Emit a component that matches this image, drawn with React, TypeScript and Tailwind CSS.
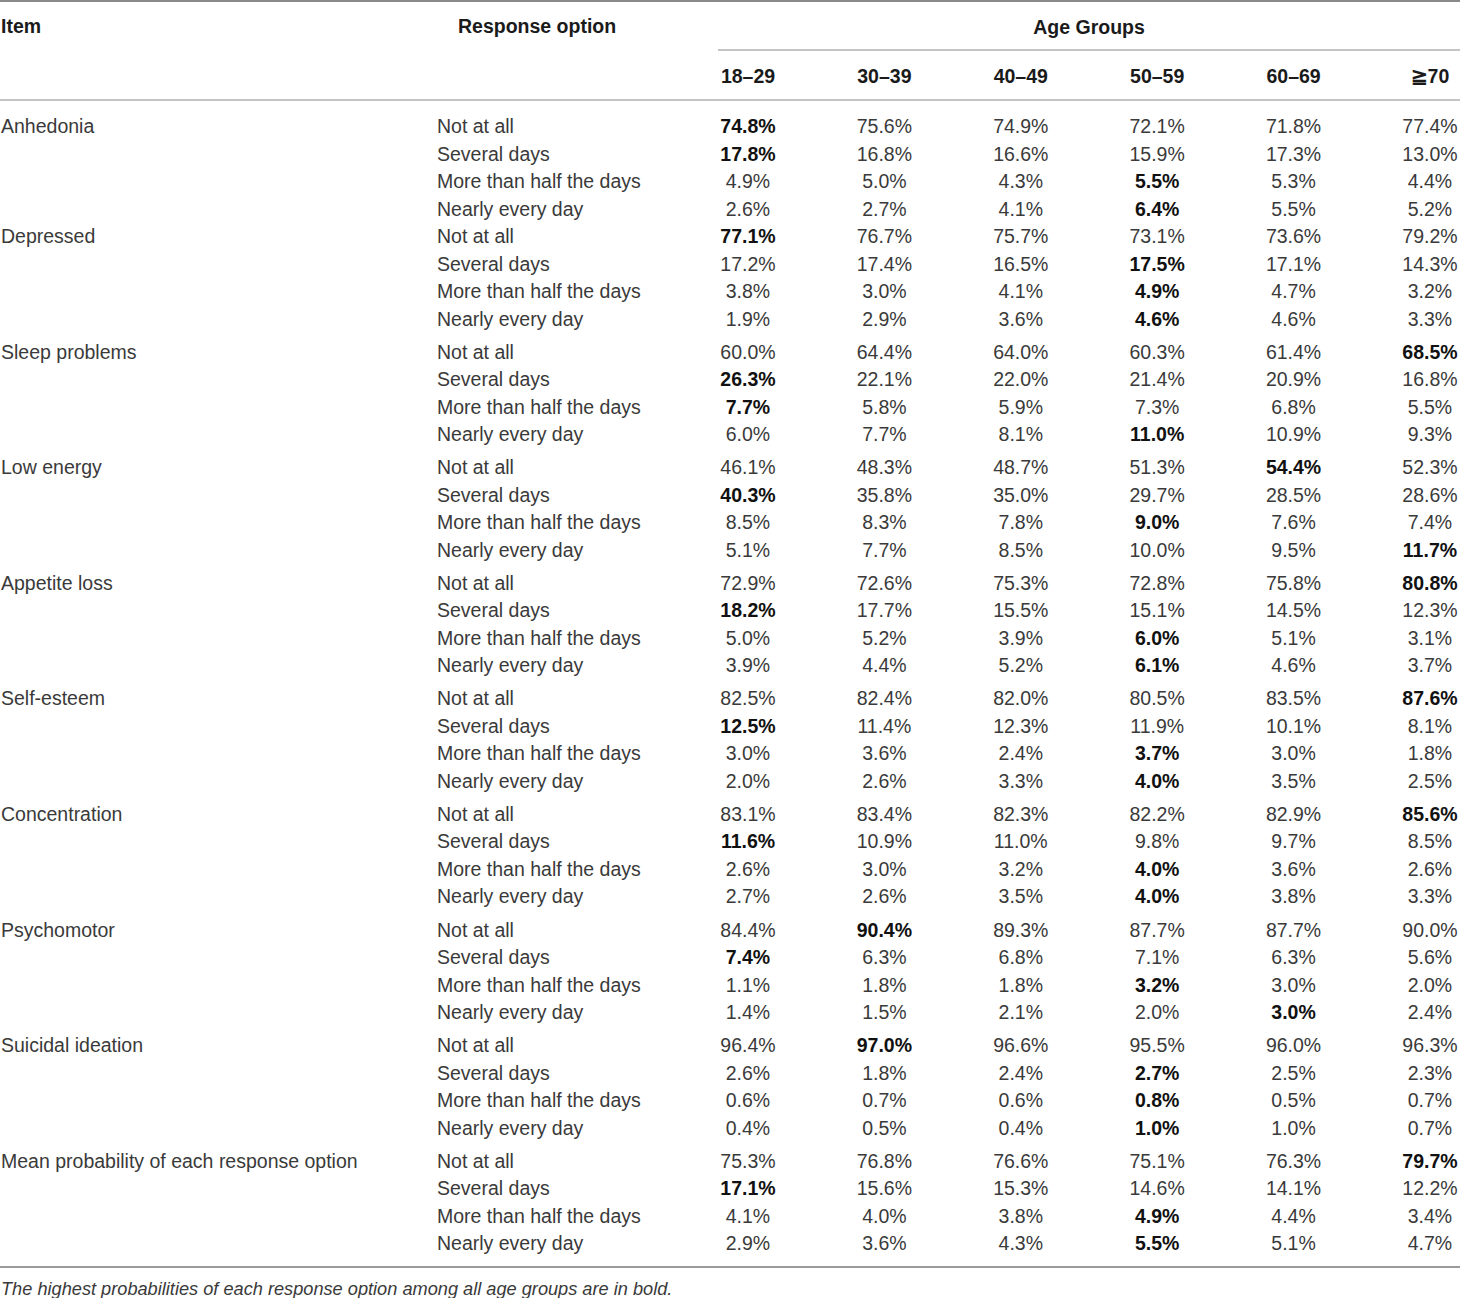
const OPTIONS = ['Not at all', 'Several days', 'More than half the days', 'Nearly every day'];
const AGES = ['18–29', '30–39', '40–49', '50–59', '60–69', '≧70'];

// "*" prefix marks the highest probability (bold)
const ITEMS: { name: string; rows: string[][] }[] = [
  { name: 'Anhedonia', rows: [
    ['*74.8%', '75.6%', '74.9%', '72.1%', '71.8%', '77.4%'],
    ['*17.8%', '16.8%', '16.6%', '15.9%', '17.3%', '13.0%'],
    ['4.9%', '5.0%', '4.3%', '*5.5%', '5.3%', '4.4%'],
    ['2.6%', '2.7%', '4.1%', '*6.4%', '5.5%', '5.2%'],
  ] },
  { name: 'Depressed', rows: [
    ['*77.1%', '76.7%', '75.7%', '73.1%', '73.6%', '79.2%'],
    ['17.2%', '17.4%', '16.5%', '*17.5%', '17.1%', '14.3%'],
    ['3.8%', '3.0%', '4.1%', '*4.9%', '4.7%', '3.2%'],
    ['1.9%', '2.9%', '3.6%', '*4.6%', '4.6%', '3.3%'],
  ] },
  { name: 'Sleep problems', rows: [
    ['60.0%', '64.4%', '64.0%', '60.3%', '61.4%', '*68.5%'],
    ['*26.3%', '22.1%', '22.0%', '21.4%', '20.9%', '16.8%'],
    ['*7.7%', '5.8%', '5.9%', '7.3%', '6.8%', '5.5%'],
    ['6.0%', '7.7%', '8.1%', '*11.0%', '10.9%', '9.3%'],
  ] },
  { name: 'Low energy', rows: [
    ['46.1%', '48.3%', '48.7%', '51.3%', '*54.4%', '52.3%'],
    ['*40.3%', '35.8%', '35.0%', '29.7%', '28.5%', '28.6%'],
    ['8.5%', '8.3%', '7.8%', '*9.0%', '7.6%', '7.4%'],
    ['5.1%', '7.7%', '8.5%', '10.0%', '9.5%', '*11.7%'],
  ] },
  { name: 'Appetite loss', rows: [
    ['72.9%', '72.6%', '75.3%', '72.8%', '75.8%', '*80.8%'],
    ['*18.2%', '17.7%', '15.5%', '15.1%', '14.5%', '12.3%'],
    ['5.0%', '5.2%', '3.9%', '*6.0%', '5.1%', '3.1%'],
    ['3.9%', '4.4%', '5.2%', '*6.1%', '4.6%', '3.7%'],
  ] },
  { name: 'Self-esteem', rows: [
    ['82.5%', '82.4%', '82.0%', '80.5%', '83.5%', '*87.6%'],
    ['*12.5%', '11.4%', '12.3%', '11.9%', '10.1%', '8.1%'],
    ['3.0%', '3.6%', '2.4%', '*3.7%', '3.0%', '1.8%'],
    ['2.0%', '2.6%', '3.3%', '*4.0%', '3.5%', '2.5%'],
  ] },
  { name: 'Concentration', rows: [
    ['83.1%', '83.4%', '82.3%', '82.2%', '82.9%', '*85.6%'],
    ['*11.6%', '10.9%', '11.0%', '9.8%', '9.7%', '8.5%'],
    ['2.6%', '3.0%', '3.2%', '*4.0%', '3.6%', '2.6%'],
    ['2.7%', '2.6%', '3.5%', '*4.0%', '3.8%', '3.3%'],
  ] },
  { name: 'Psychomotor', rows: [
    ['84.4%', '*90.4%', '89.3%', '87.7%', '87.7%', '90.0%'],
    ['*7.4%', '6.3%', '6.8%', '7.1%', '6.3%', '5.6%'],
    ['1.1%', '1.8%', '1.8%', '*3.2%', '3.0%', '2.0%'],
    ['1.4%', '1.5%', '2.1%', '2.0%', '*3.0%', '2.4%'],
  ] },
  { name: 'Suicidal ideation', rows: [
    ['96.4%', '*97.0%', '96.6%', '95.5%', '96.0%', '96.3%'],
    ['2.6%', '1.8%', '2.4%', '*2.7%', '2.5%', '2.3%'],
    ['0.6%', '0.7%', '0.6%', '*0.8%', '0.5%', '0.7%'],
    ['0.4%', '0.5%', '0.4%', '*1.0%', '1.0%', '0.7%'],
  ] },
  { name: 'Mean probability of each response option', rows: [
    ['75.3%', '76.8%', '76.6%', '75.1%', '76.3%', '*79.7%'],
    ['*17.1%', '15.6%', '15.3%', '14.6%', '14.1%', '12.2%'],
    ['4.1%', '4.0%', '3.8%', '*4.9%', '4.4%', '3.4%'],
    ['2.9%', '3.6%', '4.3%', '*5.5%', '5.1%', '4.7%'],
  ] },
];

export default function App() {
  return (
    <div className="w-[1460px] bg-white text-[19.5px] text-[#3a3a3a] font-['Liberation_Sans',Arial,sans-serif]">
      {/* header */}
      <div className="border-t-2 border-b-2 border-t-[#8a8a8a] border-b-[#c4c4c4] flex">
        <div className="w-[437px] pt-[10px] pl-px font-bold text-[#1a1a1a] leading-[28px]">Item</div>
        <div className="w-[281px] pt-[10px] pl-[21px] font-bold text-[#1a1a1a] leading-[28px]">Response option</div>
        <div className="flex-1 flex flex-col">
          <div className="h-[49px] pt-[4px] flex items-center justify-center font-bold text-[#1a1a1a] border-b-2 border-[#c4c4c4]">
            Age Groups
          </div>
          <div className="h-[48px] pt-[4px] flex items-center justify-between font-bold text-[#1a1a1a]">
            {AGES.map((a) => (
              <div key={a} className="w-[60px] text-center whitespace-nowrap">{a}</div>
            ))}
          </div>
        </div>
      </div>

      {/* body */}
      <div className="pt-[12px] pb-[8px] border-b-2 border-[#9a9a9a]">
        {ITEMS.map((item, gi) => (
          <div key={item.name} className={`flex ${gi >= 2 ? 'pt-[5.6px]' : ''}`}>
            <div className="w-[437px] pl-px leading-[27.5px] whitespace-nowrap">{item.name}</div>
            <div className="w-[281px]">
              {OPTIONS.map((o) => (
                <div key={o} className="leading-[27.5px] whitespace-nowrap">{o}</div>
              ))}
            </div>
            <div className="flex-1">
              {item.rows.map((row, ri) => (
                <div key={ri} className="flex justify-between leading-[27.5px]">
                  {row.map((v, ci) => {
                    const bold = v.startsWith('*');
                    return (
                      <div
                        key={ci}
                        className={`w-[60px] text-center whitespace-nowrap ${bold ? 'font-bold text-[#111]' : ''}`}
                      >
                        {bold ? v.slice(1) : v}
                      </div>
                    );
                  })}
                </div>
              ))}
            </div>
          </div>
        ))}
      </div>

      {/* footnote */}
      <div className="pt-[9px] pl-px italic text-[18.2px] text-[#3a3a3a] leading-[24px] pb-[8px]">
        The highest probabilities of each response option among all age groups are in bold.
      </div>
    </div>
  );
}
